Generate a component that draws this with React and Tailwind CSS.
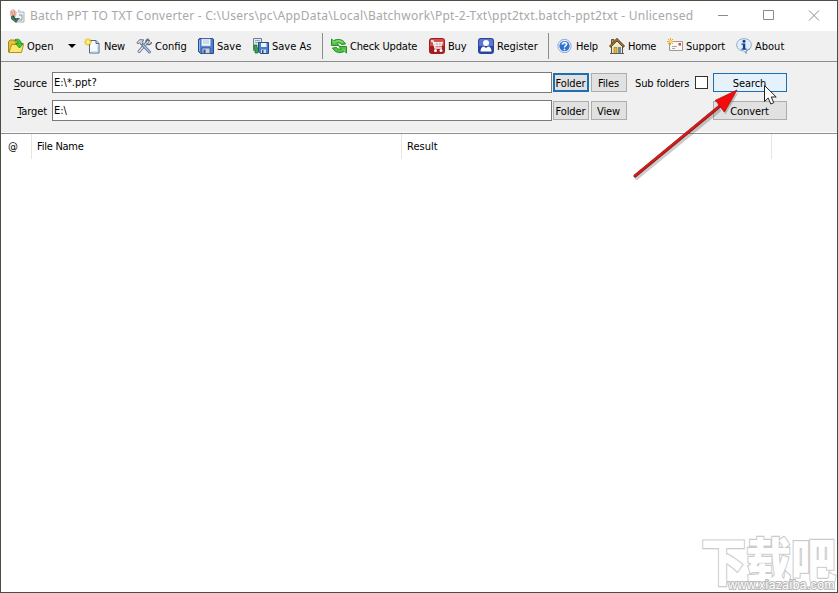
import clsx from 'clsx'

function Icon({ children }) {
  return (
    <svg width="16" height="16" viewBox="0 0 16 16" className="shrink-0" fill="none">
      {children}
    </svg>
  )
}

const AppIcon = () => (
  <Icon>
    <path d="M9 4h6v10h-8" fill="#eef1f2" stroke="#a9b3ba" />
    <path d="M10 7h3v5h-3" stroke="#8a989e" />
    <path d="M1 3l3-2 4 3-1 5-4 2-2-4z" fill="#efb9ad" />
    <path d="M2 3l2 4M5 2l1 5" stroke="#d98f86" />
    <path d="M2 8l3-1 1 3 5 0-4 5-5-4z" fill="#3d7561" />
    <path d="M4 8l3 4" stroke="#214f3e" />
    <circle cx="10" cy="3" r="1.5" fill="#c3d7e4" />
  </Icon>
)

const OpenIcon = () => (
  <Icon>
    <path d="M.5 14V3.500L2 2h4l1.500 2H13v10z" fill="#e6c23a" stroke="#a98716" />
    <path d="M1 14.500l2.500-8H15.500L13.500 14.500z" fill="#fbe773" stroke="#b39218" />
    <path d="M7 1.500c4-1 6 .8 6 4h2.300L11.500 10 7.500 5.500H10C10 3.500 9 2.500 7 2.500z" fill="#45c52f" stroke="#1d8a19" strokeWidth=".8" />
  </Icon>
)

const NewIcon = () => (
  <Icon>
    <path d="M5.500 2.500H12L15 5.500v9.500h-9.500z" fill="#f7fbff" stroke="#52658a" />
    <path d="M12 2.500V5.500h3" fill="#c4d5ef" stroke="#52658a" />
    <path d="M13.700 7v6.800H7" stroke="#c6d6ea" />
    <path d="M4 0v8M0 4h8M1.200 1.200l5.600 5.600M6.800 1.200L1.200 6.800" stroke="#eec51f" strokeWidth="1.400" />
    <circle cx="4" cy="4" r="1.700" fill="#fff6a8" />
  </Icon>
)

const ConfigIcon = () => (
  <Icon>
    <path d="M12.500 2.800L3 13.500" stroke="#5c6c7d" strokeWidth="3" strokeLinecap="round" />
    <path d="M12 3.500L3 13.500" stroke="#dfe7ee" strokeWidth="1.400" strokeLinecap="round" />
    <path d="M15.500 4a3 3 0 01-5 1.800M12.500 1a3 3 0 00-2.500 3.500" stroke="#5c6c7d" strokeWidth="1.500" />
    <path d="M5.500 5.500l8 8.500" stroke="#526c96" strokeWidth="2.800" strokeLinecap="round" />
    <path d="M7 7l6.500 7" stroke="#a9c8ee" strokeWidth="1.200" strokeLinecap="round" />
    <path d="M.8 4.500L4 1.500l4 .5-1.500 1 .5 2-1.500 1.500-2-1.500-1.500 1z" fill="#c9d2da" stroke="#66717c" strokeWidth=".9" />
  </Icon>
)

const SaveIcon = () => (
  <Icon>
    <path d="M.5 2Q.5.500 2 .500h12Q15.500.500 15.500 2v13.500H2.500l-2-2z" fill="#4d7cc9" stroke="#244a8f" />
    <path d="M1.500 2v11" stroke="#8eb3ee" />
    <path d="M3.500 1h9v7h-9z" fill="#eef4fb" stroke="#9bb3d6" strokeWidth=".6" />
    <path d="M5 3h6M5 5h6" stroke="#afbfd4" />
    <path d="M4 10h8v5.500H4z" fill="#c7d3e3" stroke="#2f5190" strokeWidth=".8" />
    <path d="M5.500 11.500h2v3.500h-2z" fill="#2f5190" />
  </Icon>
)

const SaveAsIcon = () => (
  <Icon>
    <path d="M.5.500h8v12h-8z" fill="#e3eaf0" stroke="#6d7f90" />
    <path d="M2 2.500h5M2 4.500h5" stroke="#8fa4b5" />
    <path d="M1 7h3v3h2l-1 5H2V11H1z" fill="#38a63c" stroke="#176b29" strokeWidth=".7" />
    <path d="M5.500 4.500h10v11h-8l-2-2z" fill="#4d7cc9" stroke="#244a8f" />
    <path d="M8 5h5.500v4H8z" fill="#eef4fb" />
    <path d="M8 11.500h5V15H8z" fill="#d3dce9" />
    <path d="M9 12h1.500v3H9z" fill="#2f5190" />
  </Icon>
)

const UpdateIcon = () => (
  <Icon>
    <path d="M.5 1l2 1.800C6 .5 12 .8 14.500 6L10.500 6.500C9 4.600 7.500 4.600 6 5.300l2 2.200H.5z" fill="#4cc63d" stroke="#1c8323" strokeWidth=".9" />
    <path d="M15.500 15l-2-1.800C10 15.500 4 15.200 1.500 10L5.500 9.500c1.500 1.900 3 1.900 4.500 1.200L8 8.500h7.500z" fill="#4cc63d" stroke="#1c8323" strokeWidth=".9" />
    <path d="M1.500 3l2 1.500C6 2 10 2.500 12 4.500M14.500 13l-2-1.500" stroke="#b5f09c" strokeWidth=".8" />
  </Icon>
)

const BuyIcon = () => (
  <Icon>
    <rect width="16" height="16" rx="3" fill="#a51b20" />
    <path d="M1 8V3q0-2 2-2h10q2 0 2 2v5z" fill="#c95452" />
    <path d="M2 3h2l2 7h7" stroke="#fff" strokeWidth="1.300" />
    <path d="M4.500 4H14l-1.500 4.500H6z" fill="#fff" />
    <path d="M5 6h8.500M8 4v4.500M11 4v4.500" stroke="#c95452" strokeWidth=".4" />
    <circle cx="6.500" cy="12.500" r="1.500" fill="#fff" />
    <circle cx="12" cy="12.500" r="1.500" fill="#fff" />
  </Icon>
)

const RegisterIcon = () => (
  <Icon>
    <rect width="16" height="16" rx="3" fill="#2743a4" />
    <path d="M1 8V3q0-2 2-2h10q2 0 2 2v5z" fill="#5d78ca" />
    <circle cx="8" cy="5" r="3" fill="#fff" />
    <path d="M2.500 13.500C2.500 10 4 8.500 6 8.500l2 1.500 2-1.500c2 0 3.500 1.500 3.500 5z" fill="#fff" />
  </Icon>
)

const HelpIcon = () => (
  <Icon>
    <circle cx="7.500" cy="8" r="6.600" fill="#fff" stroke="#7fa3da" />
    <circle cx="7.500" cy="8" r="5.200" fill="#2f70d3" />
    <path d="M3.500 6.500a4.200 4.200 0 018 0" fill="#5f9bec" />
    <path d="M5.500 6.500C5.500 3.800 9.700 4 9.500 6.500 9.400 7.800 7.500 7.800 7.500 9.500" stroke="#fff" strokeWidth="1.500" />
    <circle cx="7.500" cy="11.400" r=".9" fill="#fff" />
  </Icon>
)

const HomeIcon = () => (
  <Icon>
    <path d="M2.500 8v7.500h11V8L8 3z" fill="#f2e9c6" stroke="#565041" />
    <path d="M2.500 6V1.500H5V4" fill="#bc9b61" stroke="#645237" />
    <path d="M.8 8.800L8 1.500l7.200 7.300" stroke="#5b4423" strokeWidth="2.400" />
    <path d="M1.200 8.500L8 1.500l6.800 7" stroke="#c1924b" strokeWidth="1" />
    <path d="M5 9.500h3v6H5z" fill="#e7b72c" stroke="#8d6b1b" strokeWidth=".6" />
    <path d="M9 9h3v6H9z" fill="#7387a2" />
    <path d="M1 15.500h14" stroke="#50606b" />
  </Icon>
)

const SupportIcon = () => (
  <Icon>
    <path d="M2.500 3.500h13v9h-13z" fill="#f9f8f5" stroke="#a09a97" />
    <path d="M5 8.500h5M5 10.500h3" stroke="#aaa5ad" />
    <path d="M11.500 5h2.500v2.500h-2.500z" fill="#cc4b43" />
    <path d="M3.500 0v7M0 3.500h7M1 1l5 5M6 1L1 6" stroke="#e8a32b" />
    <circle cx="3.500" cy="3.500" r="1.400" fill="#ffe27a" />
  </Icon>
)

const AboutIcon = () => (
  <Icon>
    <path d="M8 .7c4.300 0 7.300 2.500 7.300 6.100 0 3-2 5.200-5 5.900v2.600L7.500 13C3.500 12.800.7 10.300.7 6.800.7 3.200 3.700.7 8 .7z" fill="#e0effb" stroke="#8baac5" />
    <path d="M10 15.500V13l4-2.500" stroke="#6c9dc7" />
    <circle cx="8" cy="3.200" r="1.500" fill="#173c94" />
    <path d="M5.500 5.500h3.800v5h1.200v1.200H5.500v-1.200h1.400V6.700H5.500z" fill="#173c94" />
  </Icon>
)

const TOOLS = [
  { label: 'Open', icon: OpenIcon, width: 'w-[60px]', gap: 'gap-[3px]' },
  { drop: true },
  { label: 'New', icon: NewIcon, width: 'w-[52px]', gap: 'gap-1 tracking-[-0.2px]' },
  { label: 'Config', icon: ConfigIcon, width: 'w-[62px]', gap: 'gap-[3px]' },
  { label: 'Save', icon: SaveIcon, width: 'w-[55px]', gap: 'gap-[3px]' },
  { label: 'Save As', icon: SaveAsIcon, width: 'w-[69px]', gap: 'gap-[3px]' },
  { sep: true },
  { label: 'Check Update', icon: UpdateIcon, width: 'w-[98px]', gap: 'gap-[3px] tracking-[-0.18px]' },
  { label: 'Buy', icon: BuyIcon, width: 'w-[49px]', gap: 'gap-[3px] tracking-[-0.2px]' },
  { label: 'Register', icon: RegisterIcon, width: 'w-[70px]', gap: 'gap-[3px]' },
  { sep: true },
  { label: 'Help', icon: HelpIcon, width: 'w-[52px]', gap: 'gap-[3px] tracking-[-0.2px]' },
  { label: 'Home', icon: HomeIcon, width: 'w-[58px]', gap: 'gap-[3px] tracking-[-0.3px]' },
  { label: 'Support', icon: SupportIcon, width: 'w-[69px]', gap: 'gap-[3px]' },
  { label: 'About', icon: AboutIcon, width: 'w-[60px]', gap: 'gap-[3px]' },
]

function Toolbar() {
  return (
    <div className="flex h-[30px] shrink-0 items-center bg-[#f0f0f0] pl-[7px]">
      {TOOLS.map((tool, i) => {
        if (tool.sep) return <div key={i} className="mr-2 h-[26px] w-px bg-[#8c8c8c]" />
        if (tool.drop) {
          return (
            <div key={i} className="w-4">
              <div className="h-0 w-0 border-x-4 border-t-4 border-x-transparent border-t-black" />
            </div>
          )
        }
        const ToolIcon = tool.icon
        return (
          <button key={i} className={clsx('flex shrink-0 items-center whitespace-nowrap', tool.width, tool.gap)}>
            <ToolIcon />
            <span className="pt-[2px]">{tool.label}</span>
          </button>
        )
      })}
    </div>
  )
}

function PushButton({ children, className = 'w-9 border-[#adadad] bg-[#e1e1e1]' }) {
  return (
    <button
      className={clsx(
        'flex h-[19px] shrink-0 items-center justify-center border pt-[2px] pr-px tracking-[-0.1px] whitespace-nowrap',
        className,
      )}
    >
      {children}
    </button>
  )
}

function PathRow({ label, value, children }) {
  return (
    <div className="flex h-[21px] items-center">
      <label className="w-[51px] shrink-0 pt-[2px] pr-[5px] text-right tracking-[-0.1px]">
        <span className="underline underline-offset-2">{label[0]}</span>
        {label.slice(1)}
      </label>
      <div className="mr-px flex h-[21px] w-[500px] shrink-0 items-center border border-[#7a7a7a] bg-white pl-px">
        {value}
      </div>
      {children}
    </div>
  )
}

function Pointers() {
  return (
    <svg className="pointer-events-none absolute top-[77px] left-[619px]" width="170" height="110" viewBox="620 78 170 110">
      <g opacity=".3" transform="translate(1.500 2.500)">
        <path d="M635 176L718 108" stroke="#555" strokeWidth="3" strokeLinecap="round" />
        <path d="M737 90l-22 11 9 11z" fill="#555" />
      </g>
      <path d="M635 176L720 106" stroke="#8f1a1a" strokeWidth="3.200" strokeLinecap="round" />
      <path d="M635 175.500L720 105.500" stroke="#d71d1d" strokeWidth="1.800" strokeLinecap="round" />
      <path d="M737 90L715 100.500L718 103L719.500 106L724.500 112z" fill="#f40b0b" stroke="#b51212" strokeWidth=".8" />
      <path d="M764.500 85.500v16l3.700-3.500 2.600 6 3-1.300-2.600-5.700h5z" fill="#fff" stroke="#222" />
    </svg>
  )
}

function Watermark() {
  return (
    <div className="pointer-events-none absolute right-0 bottom-0 flex flex-col items-end">
      <div className="mr-px -mb-[11px] origin-bottom scale-y-[1.13] font-['Noto_Sans_CJK_SC',sans-serif] text-[45px] leading-[54px] font-black whitespace-nowrap text-white [-webkit-text-stroke:2px_#cbcbcb] [paint-order:stroke_fill]">
        下载吧
      </div>
      <div className="z-10 mr-[2px] font-['Liberation_Sans',sans-serif] text-[12px] leading-[13px] tracking-[0.5px] text-white [-webkit-text-stroke:2px_#b9b9b9] [paint-order:stroke_fill]">
        www.xiazaiba.com
      </div>
    </div>
  )
}

export default function App() {
  return (
    <div className="relative flex h-[593px] w-[838px] flex-col overflow-hidden border border-[#4b4f43] bg-white font-['DejaVu_Sans_Condensed','Noto_Sans',sans-serif] text-[11px] leading-[14px] text-black">
      <div className="flex h-[30px] shrink-0 items-center pl-2">
        <AppIcon />
        <h1 className="ml-[5px] w-[685px] shrink-0 font-['Noto_Sans','Noto_Sans_CJK_SC',sans-serif] text-[12px] tracking-[0.245px] whitespace-nowrap text-[#a8a8a8]">
          Batch PPT TO TXT Converter - C:\Users\pc\AppData\Local\Batchwork\Ppt-2-Txt\ppt2txt.batch-ppt2txt - Unlicensed
        </h1>
        <svg width="110" height="12" viewBox="0 0 110 12" fill="none" stroke="#8b8b8b" className="ml-[3px] shrink-0">
          <path d="M0 5.500h10M45.500.500h10v9h-10zM91 .5l10 10M101 .5l-10 10" />
        </svg>
      </div>

      <Toolbar />

      <div className="flex h-[71px] shrink-0 flex-col gap-[7px] border-t border-[#8d8d8d] bg-[#f0f0f0] pt-[10px]">
        <PathRow label="Source" value="E:\*.ppt?">
          <PushButton className="w-9 border-2 border-[#1c6fb4] bg-[#e1e1e1]">Folder</PushButton>
          <div className="w-[2px]" />
          <PushButton>Files</PushButton>
          <span className="ml-2 w-[60px] shrink-0 pt-[2px] tracking-[-0.15px] whitespace-nowrap">Sub folders</span>
          <div className="mr-[5px] h-[13px] w-[13px] border border-[#333] bg-white" />
          <PushButton className="w-[74px] border-[#1c6fb4] bg-[#e5f1fb]">Search</PushButton>
        </PathRow>
        <PathRow label="Target" value="E:\">
          <PushButton>Folder</PushButton>
          <div className="w-[2px]" />
          <PushButton>View</PushButton>
          <PushButton className="ml-[86px] w-[74px] border-[#adadad] bg-[#e1e1e1]">Convert</PushButton>
        </PathRow>
      </div>

      <div className="mt-px flex h-[26px] shrink-0 items-center border-t border-[#8d8d8d]">
        <div className="flex h-full w-[31px] items-center border-r border-[#e5e5e5] pl-[7px]">@</div>
        <div className="flex h-full w-[370px] items-center border-r border-[#e5e5e5] pl-[5px] tracking-[-0.25px]">
          File Name
        </div>
        <div className="flex h-full w-[370px] items-center border-r border-[#e5e5e5] pl-[5px]">Result</div>
      </div>

      <Pointers />
      <Watermark />
    </div>
  )
}
